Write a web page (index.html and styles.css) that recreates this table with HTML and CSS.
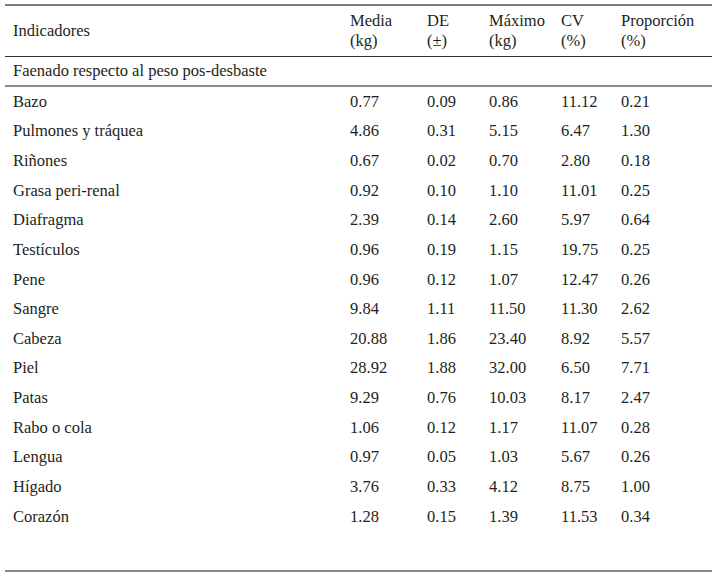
FILE: index.html
```html
<!DOCTYPE html>
<html lang="es">
<head>
<meta charset="utf-8">
<title>Indicadores</title>
<link rel="stylesheet" href="styles.css">
</head>
<body>
<div class="wrap">
<table class="tbl">
<colgroup>
<col class="c1"><col class="c2"><col class="c3"><col class="c4"><col class="c5"><col class="c6">
</colgroup>
<thead>
<tr class="head">
<th>Indicadores</th>
<th>Media<br>(kg)</th>
<th>DE<br>(±)</th>
<th>Máximo<br>(kg)</th>
<th>CV<br>(%)</th>
<th>Proporción<br>(%)</th>
</tr>
</thead>
<tbody>
<tr class="section"><td colspan="6">Faenado respecto al peso pos-desbaste</td></tr>
<tr><td>Bazo</td><td>0.77</td><td>0.09</td><td>0.86</td><td>11.12</td><td>0.21</td></tr>
<tr><td>Pulmones y tráquea</td><td>4.86</td><td>0.31</td><td>5.15</td><td>6.47</td><td>1.30</td></tr>
<tr><td>Riñones</td><td>0.67</td><td>0.02</td><td>0.70</td><td>2.80</td><td>0.18</td></tr>
<tr><td>Grasa peri-renal</td><td>0.92</td><td>0.10</td><td>1.10</td><td>11.01</td><td>0.25</td></tr>
<tr><td>Diafragma</td><td>2.39</td><td>0.14</td><td>2.60</td><td>5.97</td><td>0.64</td></tr>
<tr><td>Testículos</td><td>0.96</td><td>0.19</td><td>1.15</td><td>19.75</td><td>0.25</td></tr>
<tr><td>Pene</td><td>0.96</td><td>0.12</td><td>1.07</td><td>12.47</td><td>0.26</td></tr>
<tr><td>Sangre</td><td>9.84</td><td>1.11</td><td>11.50</td><td>11.30</td><td>2.62</td></tr>
<tr><td>Cabeza</td><td>20.88</td><td>1.86</td><td>23.40</td><td>8.92</td><td>5.57</td></tr>
<tr><td>Piel</td><td>28.92</td><td>1.88</td><td>32.00</td><td>6.50</td><td>7.71</td></tr>
<tr><td>Patas</td><td>9.29</td><td>0.76</td><td>10.03</td><td>8.17</td><td>2.47</td></tr>
<tr><td>Rabo o cola</td><td>1.06</td><td>0.12</td><td>1.17</td><td>11.07</td><td>0.28</td></tr>
<tr><td>Lengua</td><td>0.97</td><td>0.05</td><td>1.03</td><td>5.67</td><td>0.26</td></tr>
<tr><td>Hígado</td><td>3.76</td><td>0.33</td><td>4.12</td><td>8.75</td><td>1.00</td></tr>
<tr><td>Corazón</td><td>1.28</td><td>0.15</td><td>1.39</td><td>11.53</td><td>0.34</td></tr>
</tbody>
</table>
</div>
</body>
</html>
```
FILE: styles.css
```css
html, body {
  margin: 0;
  padding: 0;
  background: #ffffff;
}
body {
  font-family: "Liberation Serif", Tinos, "Times New Roman", "DejaVu Serif", "Noto Serif", serif;
  font-size: 16.5px;
  color: #231f20;
}
.wrap {
  margin: 4px 0 0 5px;
  width: 707px;
  border-top: 2px solid #7d7d7d;
  border-bottom: 2px solid #8a8a8a;
  padding-bottom: 39px;
}
.tbl {
  width: 707px;
  table-layout: fixed;
  border-collapse: collapse;
  font-family: inherit;
  font-size: inherit;
  color: inherit;
}
.c1 { width: 340px; }
.c2 { width: 77px; }
.c3 { width: 62px; }
.c4 { width: 72px; }
.c5 { width: 60px; }
.c6 { width: 96px; }
.tbl th, .tbl td {
  padding: 0 0 0 5px;
  text-align: left;
  font-weight: normal;
  vertical-align: middle;
  white-space: nowrap;
}
.tbl th:first-child, .tbl td:first-child {
  padding-left: 8px;
}
.head th {
  height: 50px;
  line-height: 20px;
  border-bottom: 1px solid #333333;
}
.section td {
  height: 28px;
  border-bottom: 2px solid #8a8a8a;
}
.tbl tbody tr:not(.section) td {
  height: 29.64px;
  line-height: 20px;
}
```
